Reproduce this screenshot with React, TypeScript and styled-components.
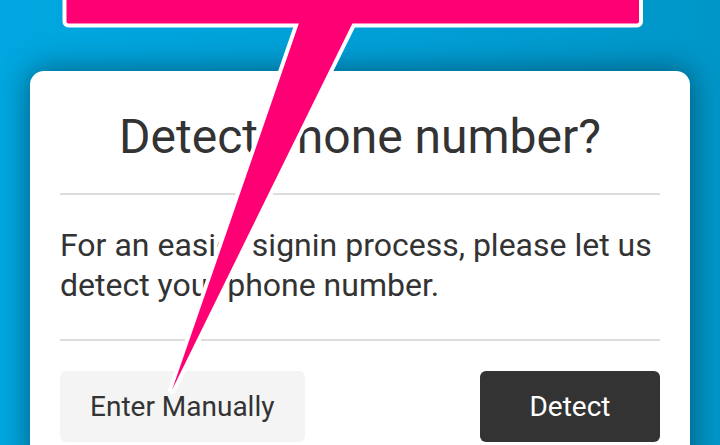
import React from 'react'
import styled, { createGlobalStyle } from 'styled-components'

const GlobalStyle = createGlobalStyle`
  html, body {
    margin: 0;
    padding: 0;
    overflow: hidden;
  }

  body {
    font-family: Roboto, "Noto Sans", "Liberation Sans", sans-serif;
    color: #333333;
  }
`

const Page = styled.div`
  position: relative;
  box-sizing: border-box;
  width: 720px;
  height: 445px;
  padding: 71px 30px 0;
  overflow: hidden;

  background: linear-gradient(90deg, #00a7e0 0%, #009fd6 55%, #0096c8 100%);
`

const Card = styled.div`
  display: flex;
  flex-direction: column;

  padding: 38px 30px 30px;

  background-color: #ffffff;
  border-radius: 14px;

  box-shadow: 0 0 30px 2px rgba(0, 0, 0, 0.4);
`

const Title = styled.h1`
  margin: 0;

  font-size: 48px;
  line-height: 56px;
  font-weight: 400;
  text-align: center;
  color: #333333;
`

const Divider = styled.hr<{ $top: number }>`
  margin: ${p => p.$top}px 0 0;
  height: 2px;

  background-color: #dddddd;
  border: none;
`

const Message = styled.p`
  margin: 30px 0 0;

  font-size: 32px;
  line-height: 40px;
  color: #333333;
`

const Actions = styled.div`
  display: flex;
  justify-content: space-between;
  align-items: center;

  margin-top: 30px;
`

const Button = styled.button<{ $primary?: boolean }>`
  box-sizing: border-box;
  height: 71px;
  min-width: 180px;
  padding: 0 30px;

  font-family: inherit;
  font-size: 28px;
  line-height: 70px;

  color: ${p => (p.$primary ? '#ffffff' : '#333333')};
  background-color: ${p => (p.$primary ? '#333333' : '#f4f4f4')};

  border: none;
  border-radius: 6px;

  cursor: pointer;
`

const Callout = styled.svg`
  position: absolute;
  left: 0;
  top: 0;
  pointer-events: none;
`

const PINK = '#ff0074'
const POINTER = '303.5,10 359,10 172,390'

const CalloutArrow: React.FC = () => (
  <Callout width="720" height="445" viewBox="0 0 720 445">
    <polygon
      points={POINTER}
      fill={PINK}
      stroke="#ffffff"
      strokeWidth="8"
      strokeLinejoin="round"
    />
    <rect
      x="64.5"
      y="-40"
      width="576.5"
      height="65.5"
      rx="4"
      fill={PINK}
      stroke="#ffffff"
      strokeWidth="4"
    />
    <polygon points={POINTER} fill={PINK} />
  </Callout>
)

export default function App() {
  return (
    <>
      <GlobalStyle />
      <Page>
        <Card>
          <Title>Detect phone number?</Title>
          <Divider $top={28} />
          <Message>
            For an easier signin process, please let us detect your phone number.
          </Message>
          <Divider $top={34} />
          <Actions>
            <Button>Enter Manually</Button>
            <Button $primary>Detect</Button>
          </Actions>
        </Card>
        <CalloutArrow />
      </Page>
    </>
  )
}
